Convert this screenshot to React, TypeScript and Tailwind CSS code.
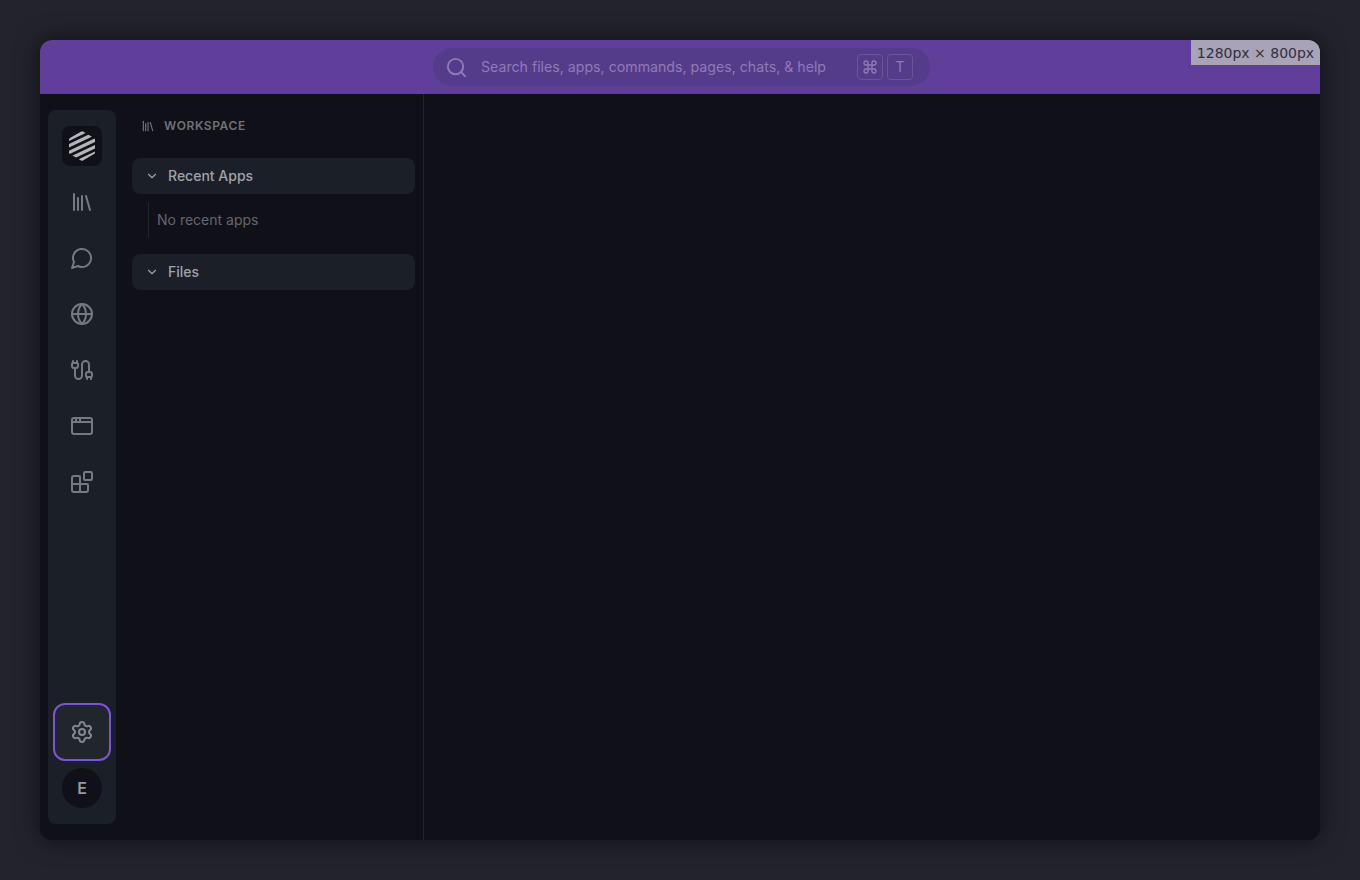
import { Search, Command, Library, Globe, Cable, AppWindow, Blocks, Settings, ChevronDown } from "lucide-react"
import type { SVGProps } from "react"

function ChatBubble(props: SVGProps<SVGSVGElement>) {
  return (
    <svg viewBox="0 0 24 24" fill="none" stroke="currentColor" strokeLinecap="round" strokeLinejoin="round" {...props}>
      <path d="M7.9 20A9 9 0 1 0 4 16.1L2 22Z" />
    </svg>
  )
}

const railIcons = [Library, ChatBubble, Globe, Cable, AppWindow, Blocks]

function Logo() {
  return (
    <svg viewBox="0 0 26 30" className="w-[26px] h-[30px]" fill="none">
      <defs>
        <clipPath id="hex">
          <path d="M12 0.6 Q13 0 14 0.6 L25 7 Q26 7.6 26 8.6 V21.4 Q26 22.4 25 23 L14 29.4 Q13 30 12 29.4 L1 23 Q0 22.4 0 21.4 V8.6 Q0 7.6 1 7 Z" />
        </clipPath>
      </defs>
      <g clipPath="url(#hex)" stroke="#b4b5b9" strokeWidth="3.3">
        <path d="M-3 9.5 L20 -1.5" />
        <path d="M-3 16.2 L32 -0.5" />
        <path d="M-3 22.9 L32 6.2" />
        <path d="M-3 29.6 L32 12.9" />
        <path d="M3 33.2 L32 19.6" />
      </g>
    </svg>
  )
}

function SectionHeader({ title }: { title: string }) {
  return (
    <div className="h-9 rounded-lg bg-[#1a1f28] flex items-center pl-[13px] text-[#a1a3a8]">
      <ChevronDown className="w-[14px] h-[14px] mr-[9px]" strokeWidth={2} />
      <span className="text-sm font-medium">{title}</span>
    </div>
  )
}

export default function App() {
  return (
    <div className="h-[880px] w-full bg-[#22232c] p-10 font-['Inter',sans-serif] overflow-hidden">
      <div className="relative h-[800px] w-[1280px] rounded-xl overflow-hidden bg-[#101118] flex flex-col shadow-[0_0_24px_rgba(0,0,0,0.55)]">
        {/* Top bar */}
        <header className="h-[54px] shrink-0 bg-[#5f3f9a] flex items-start justify-center pt-2 pl-[3px]">
          <div className="w-[497px] h-[38px] rounded-full bg-[#553c8a] flex items-center pl-[12px] pr-[17px] text-[#8f7bb5]">
            <Search className="w-[23px] h-[23px] shrink-0" strokeWidth={2} />
            <span className="ml-[13px] text-[14.17px] flex-1 whitespace-nowrap">Search files, apps, commands, pages, chats, &amp; help</span>
            <div className="flex gap-1">
              <kbd className="w-[26px] h-[26px] rounded border border-[#6b5497] flex items-center justify-center">
                <Command className="w-[16px] h-[16px]" strokeWidth={2} />
              </kbd>
              <kbd className="w-[26px] h-[26px] rounded border border-[#6b5497] flex items-center justify-center text-sm font-['Inter',sans-serif] font-normal">T</kbd>
            </div>
          </div>
        </header>

        <div className="flex-1 flex min-h-0">
          {/* Icon rail */}
          <nav className="w-[68px] ml-2 my-4 rounded-lg bg-[#1a1f28] py-2 px-[6px] flex flex-col items-center">
            <div className="h-14 w-14 flex items-center justify-center shrink-0">
              <div className="w-10 h-10 rounded-lg bg-[#101118] flex items-center justify-center">
                <Logo />
              </div>
            </div>
            {railIcons.map((Icon, i) => (
              <div key={i} className="h-14 w-14 flex items-center justify-center shrink-0 text-[#76797f]">
                <Icon className="w-6 h-6" strokeWidth={2} />
              </div>
            ))}
            <div className="mt-auto h-[58px] w-[58px] -my-px shrink-0 rounded-xl border-2 border-[#7c55d6] bg-[#21252c] flex items-center justify-center text-[#85888d]">
              <Settings className="w-6 h-6" strokeWidth={2} />
            </div>
            <div className="h-14 w-14 flex items-center justify-center shrink-0">
              <div className="w-10 h-10 rounded-full bg-[#101118] flex items-center justify-center text-base font-semibold text-[#97999e]">E</div>
            </div>
          </nav>

          {/* Workspace panel */}
          <aside className="w-[308px] shrink-0 border-r border-[#22252d] pl-4 pr-2 pt-[16px]">
            <div className="h-[32px] flex items-center pl-[9px] text-[#6f7177]">
              <Library className="w-[14px] h-[14px] mr-[9px]" strokeWidth={2} />
              <span className="text-xs font-semibold tracking-[0.05em]">WORKSPACE</span>
            </div>
            <div className="mt-4">
              <SectionHeader title="Recent Apps" />
              <div className="mt-2 ml-4 h-9 border-l border-[#22252d] pl-2 flex items-center text-sm text-[#64666c]">No recent apps</div>
              <div className="mt-4">
                <SectionHeader title="Files" />
              </div>
            </div>
          </aside>

          <main className="flex-1" />
        </div>

        {/* Viewport size tag */}
        <div className="absolute top-0 right-0 w-[129px] h-[25px] bg-[#a8a3b7] text-[#30303c] flex items-center justify-center text-sm font-['DejaVu_Sans',sans-serif] whitespace-nowrap">1280px × 800px</div>
      </div>
    </div>
  )
}
